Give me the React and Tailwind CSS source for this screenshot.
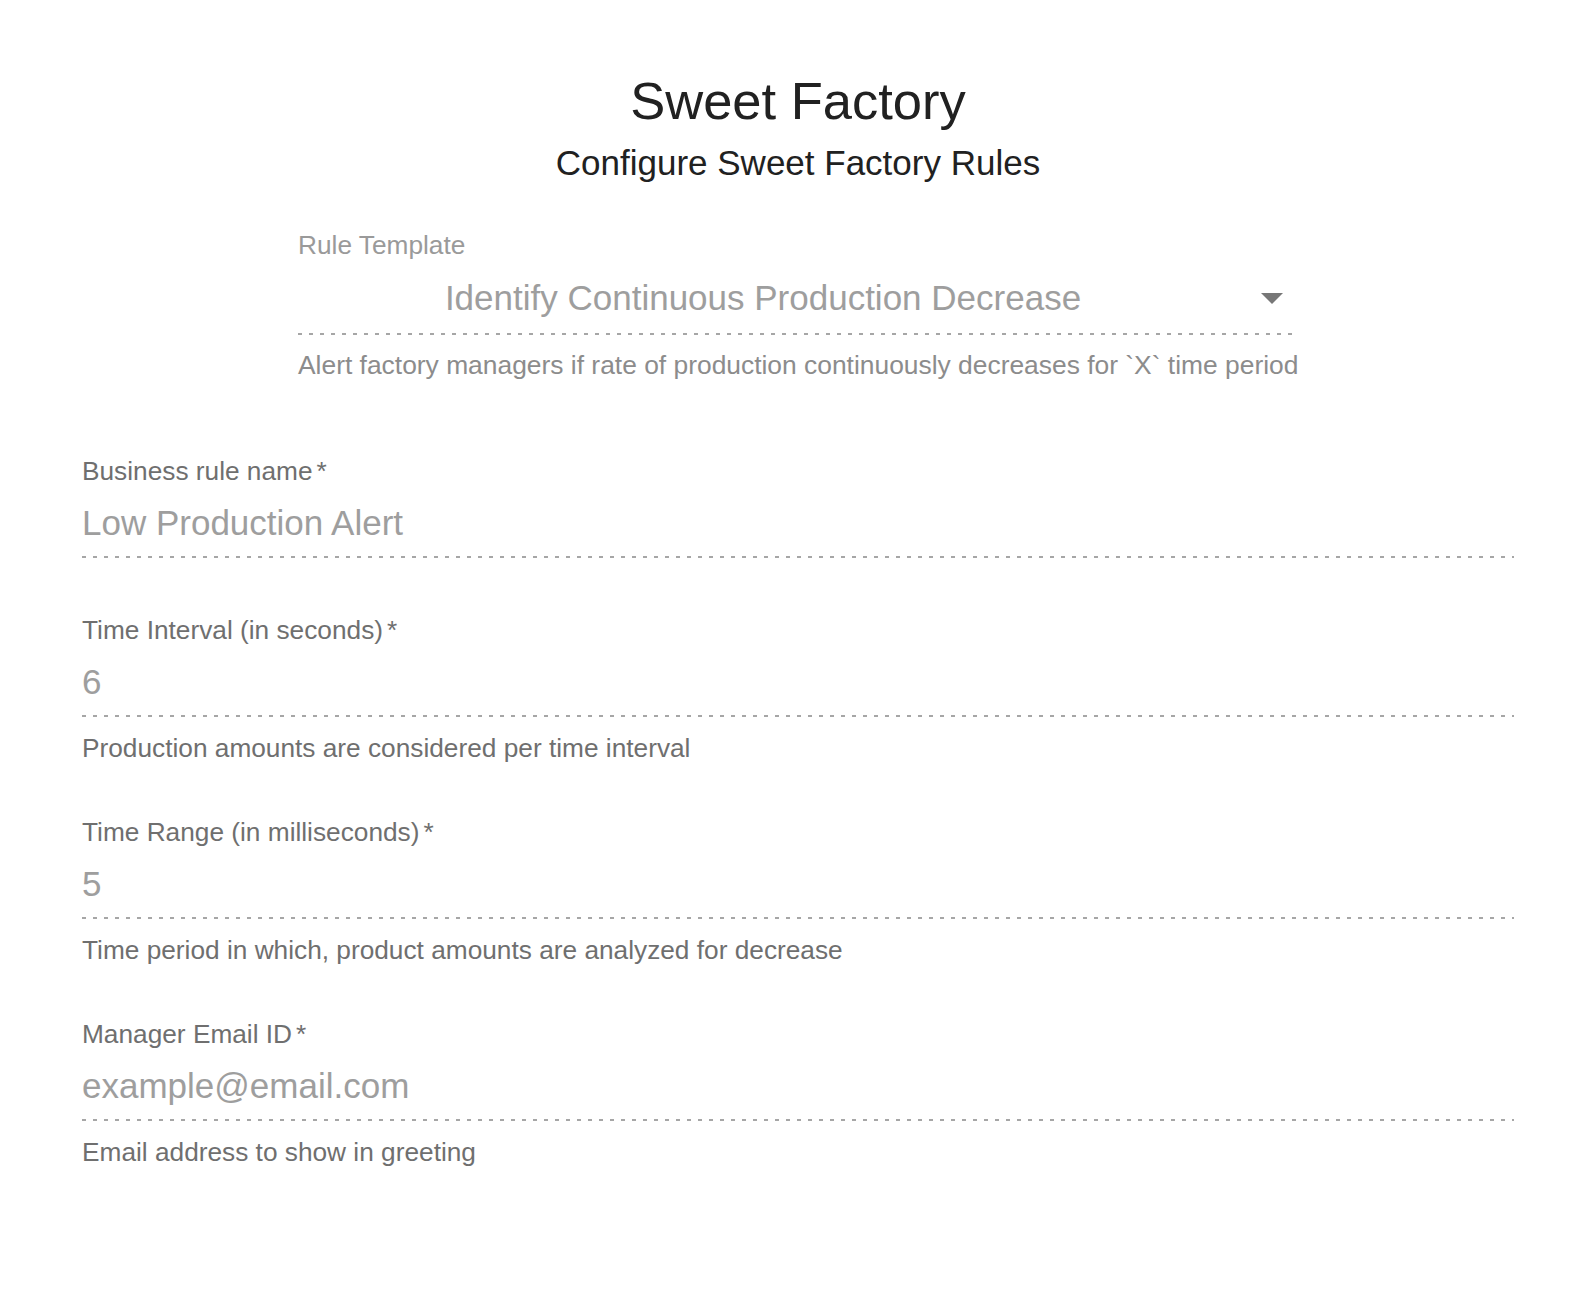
import React from "react";

const dash =
  "h-[2px] w-full bg-[repeating-linear-gradient(to_right,#a6a6a6_0px,#a6a6a6_4px,transparent_4px,transparent_11px)]";

function Field({ label, value, helper }) {
  return (
    <div className="flex flex-col">
      <div className="text-[26.25px] leading-[30px] text-[#6f6f6f] whitespace-nowrap">
        {label}
        <span className="ml-[4px]">*</span>
      </div>
      <div className="mt-[17px] text-[35px] leading-[40px] text-[#9e9e9e] whitespace-nowrap">
        {value}
      </div>
      <div className={"mt-[13.5px] " + dash} />
      {helper && (
        <div className="mt-[16px] text-[26.25px] leading-[30px] text-[#6f6f6f] whitespace-nowrap">
          {helper}
        </div>
      )}
    </div>
  );
}

export default function App() {
  return (
    <div
      className="min-h-[1300px] w-full bg-white"
      style={{ fontFamily: '"Liberation Sans", Arial, Helvetica, sans-serif' }}
    >
      <div className="ml-[82px] w-[1432px] pt-[71px]">
        <h1 className="text-center text-[52.5px] leading-[60px] text-[#212121] font-normal">
          Sweet Factory
        </h1>
        <h2 className="mt-[12px] text-center text-[35px] leading-[40px] text-[#212121] font-normal">
          Configure Sweet Factory Rules
        </h2>

        <div className="ml-[216px] mt-[47px] w-[996px] flex flex-col">
          <div className="text-[26.25px] leading-[30px] text-[#9a9a9a]">Rule Template</div>
          <div className="relative mt-[18px] pr-[66px] text-center text-[35px] leading-[40px] text-[#9e9e9e] whitespace-nowrap">
            Identify Continuous Production Decrease
            <svg
              className="absolute right-[11px] top-[15px]"
              width="22"
              height="11"
              viewBox="0 0 22 11"
            >
              <polygon points="0,0 22,0 11,11" fill="#777777" />
            </svg>
          </div>
          <div className={"mt-[15px] " + dash} />
          <div className="mt-[14.5px] text-[26.4px] leading-[30px] text-[#8c8c8c] whitespace-nowrap">
            Alert factory managers if rate of production continuously decreases for `X` time period
          </div>
        </div>

        <div className="mt-[76px] flex flex-col">
          <Field label="Business rule name" value="Low Production Alert" />
          <div className="h-[56.6px]" />
          <Field
            label="Time Interval (in seconds)"
            value="6"
            helper="Production amounts are considered per time interval"
          />
          <div className="h-[53.5px]" />
          <Field
            label="Time Range (in milliseconds)"
            value="5"
            helper="Time period in which, product amounts are analyzed for decrease"
          />
          <div className="h-[53.5px]" />
          <Field
            label="Manager Email ID"
            value="example@email.com"
            helper="Email address to show in greeting"
          />
        </div>
      </div>
    </div>
  );
}
